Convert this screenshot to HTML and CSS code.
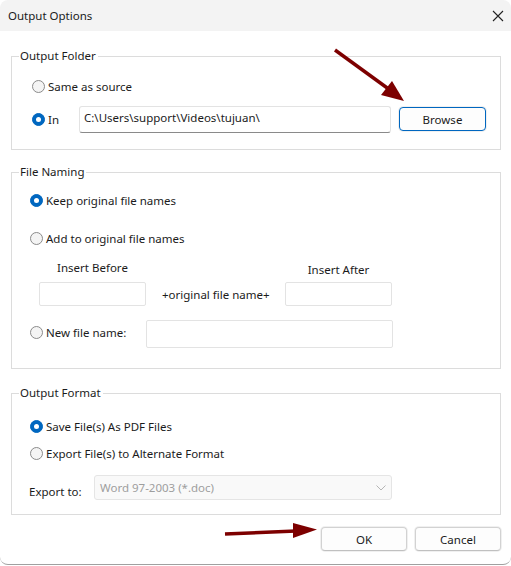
FILE: index.html
```html
<!DOCTYPE html>
<html lang="en">
<head>
<meta charset="utf-8">
<title>Output Options</title>
<link rel="stylesheet" href="styles.css">
</head>
<body>
<div class="window">
  <header class="titlebar">
    <span class="title">Output Options</span>
    <span class="close" aria-label="Close">
      <svg width="12" height="12" viewBox="0 0 12 12"><path d="M1 1 L11 11 M11 1 L1 11" stroke="#222" stroke-width="1.1" fill="none"/></svg>
    </span>
  </header>

  <main class="content">
    <section class="group g-folder">
      <div class="legend">Output Folder</div>
      <div class="radio-row r-same"><span class="radio"></span><span>Same as source</span></div>
      <div class="folder-row">
        <div class="radio-row r-in"><span class="radio checked"></span><span>In</span></div>
        <div class="textbox path">C:\Users\support\Videos\tujuan\</div>
        <div class="btn btn-default browse">Browse</div>
      </div>
    </section>

    <section class="group g-naming">
      <div class="legend">File Naming</div>
      <div class="radio-row r-keep"><span class="radio checked"></span><span>Keep original file names</span></div>
      <div class="radio-row r-add"><span class="radio"></span><span>Add to original file names</span></div>
      <div class="affix-grid">
        <div class="affix-label">Insert Before</div>
        <div></div>
        <div class="affix-label after">Insert After</div>
        <div class="field small"></div>
        <div class="affix-mid">+original file name+</div>
        <div class="field small"></div>
      </div>
      <div class="newname-row">
        <div class="radio-row r-new"><span class="radio"></span><span>New file name:</span></div>
        <div class="field wide"></div>
      </div>
    </section>

    <section class="group g-format">
      <div class="legend">Output Format</div>
      <div class="radio-row r-save"><span class="radio checked"></span><span>Save File(s) As PDF Files</span></div>
      <div class="radio-row r-export"><span class="radio"></span><span>Export File(s) to Alternate Format</span></div>
      <div class="export-row">
        <span class="export-label">Export to:</span>
        <div class="select disabled">
          <span>Word 97-2003 (*.doc)</span>
          <svg width="10" height="6" viewBox="0 0 10 6"><path d="M0.5 0.5 L5 5 L9.5 0.5" stroke="#b5b5b5" stroke-width="1" fill="none"/></svg>
        </div>
      </div>
    </section>

    <footer class="actions">
      <div class="btn">OK</div>
      <div class="btn">Cancel</div>
    </footer>
  </main>

  <svg class="annotations" width="511" height="566" viewBox="0 0 511 566">
    <g fill="#7d0000" stroke="#7d0000">
      <line x1="335" y1="50" x2="390" y2="90" stroke-width="3.5"/>
      <polygon points="404,101 381,95 392,81" stroke="none"/>
      <line x1="225" y1="534" x2="296" y2="531" stroke-width="3.5"/>
      <polygon points="317,529.5 293,523 293,538" stroke="none"/>
    </g>
  </svg>
</div>
</body>
</html>
```

FILE: styles.css
```css
* { box-sizing: border-box; }

html, body {
  margin: 0;
  padding: 0;
  background: #ffffff;
}

body {
  font-family: "Noto Sans", "Segoe UI", sans-serif;
  font-size: 11.5px;
  color: #1b1b1b;
}

.window {
  position: relative;
  width: 511px;
  height: 565px;
  background: #ffffff;
  border-bottom: 1px solid #a0a0a0;
  border-radius: 8px;
  overflow: hidden;
}

/* title bar */
.titlebar {
  height: 31px;
  background: #f3f3f3;
  display: flex;
  align-items: center;
  justify-content: space-between;
  padding: 0 7px 0 8px;
}
.title { font-size: 11.5px; color: #1a1a1a; }
.close { display: flex; width: 12px; height: 12px; }

/* body */
.content {
  padding: 0 10px 0 11px;
}

.group {
  border: 1px solid #dcdcdc;
  display: flex;
  flex-direction: column;
  align-items: flex-start;
  padding-left: 7px;
  padding-right: 14px;
}
.legend {
  height: 16px;
  line-height: 16px;
  margin-top: -9px;
  padding: 0 2px 0 1px;
  background: #ffffff;
}

.radio-row {
  display: flex;
  align-items: center;
  height: 20px;
  gap: 3px;
}
.radio {
  width: 13px;
  height: 13px;
  border-radius: 50%;
  border: 1px solid #8b8b8b;
  background: #f4f4f4;
  display: flex;
  align-items: center;
  justify-content: center;
  flex: none;
}
.radio.checked {
  border-color: #0067c0;
  background: #0067c0;
}
.radio.checked::after {
  content: "";
  width: 5px;
  height: 5px;
  border-radius: 50%;
  background: #ffffff;
}

/* output folder */
.g-folder {
  margin-top: 25px;
  padding-bottom: 16px;
}
.r-same { margin: 12px 0 0 13px; }
.folder-row {
  margin: 10px 0 0 13px;
  display: flex;
  align-items: center;
}
.r-in { width: 47px; }
.textbox {
  height: 27px;
  border: 1px solid #e3e3e3;
  border-bottom: 1px solid #8a8a8a;
  border-radius: 3px;
  padding: 3px 0 0 4px;
  background: #ffffff;
}
.path { width: 312px; }
.browse {
  margin: -1px 0 0 8px;
  width: 87px;
}

.btn {
  height: 24px;
  border: 1px solid #d2d2d2;
  border-bottom-color: #c0c0c0;
  border-radius: 4px;
  background: #fdfdfd;
  display: flex;
  align-items: center;
  justify-content: center;
  box-shadow: 0 0 0 1px #f0f0f0;
}
.btn-default {
  border: 1px solid #0067c0;
}

/* file naming */
.g-naming {
  margin-top: 22px;
  padding-bottom: 20px;
}
.r-keep { margin: 10px 0 0 11px; }
.r-add { margin: 18px 0 0 11px; }
.affix-grid {
  margin: 12px 0 0 20px;
  display: grid;
  grid-template-columns: 107px 107px 107px;
  grid-template-rows: 16px 24px;
  column-gap: 16px;
  row-gap: 6px;
  align-items: center;
}
.affix-label {
  height: 16px;
  line-height: 16px;
  text-align: center;
}
.affix-label.after { line-height: 20px; }
.affix-mid { text-align: center; white-space: nowrap; }
.field {
  height: 24px;
  border: 1px solid #e3e3e3;
  border-radius: 2px;
  background: #ffffff;
}
.newname-row {
  margin: 14px 0 0 11px;
  display: flex;
  align-items: center;
}
.r-new { width: 116px; margin-top: -3px; }
.field.wide { width: 247px; height: 28px; }

/* output format */
.g-format {
  margin-top: 24px;
  padding-bottom: 14px;
}
.r-save { margin: 15px 0 0 11px; }
.r-export { margin: 7px 0 0 11px; }
.export-row {
  margin: 12px 0 0 10px;
  display: flex;
  align-items: center;
}
.export-label {
  width: 65px;
  padding-top: 7px;
}
.select {
  width: 298px;
  height: 25px;
  border: 1px solid #e5e5e5;
  border-radius: 3px;
  background: #f9f9f9;
  display: flex;
  align-items: center;
  justify-content: space-between;
  padding: 0 5px;
}
.select.disabled { color: #9e9e9e; }

/* dialog buttons */
.actions {
  margin-top: 12px;
  display: flex;
  justify-content: flex-end;
  gap: 8px;
}
.actions .btn { width: 86px; }

/* callout arrows drawn over the dialog */
.annotations {
  position: absolute;
  left: 0;
  top: 0;
  pointer-events: none;
}
```
